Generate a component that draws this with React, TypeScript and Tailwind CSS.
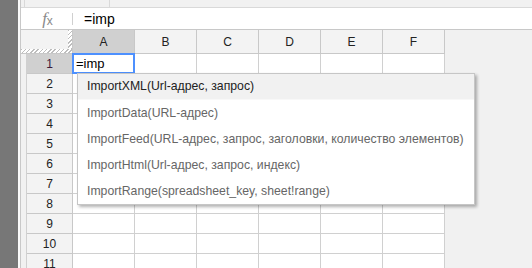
import React from "react";

const cols = ["A", "B", "C", "D", "E", "F"];
const rows = [1, 2, 3, 4, 5, 6, 7, 8, 9, 10, 11];
const items = [
  "ImportXML(Url-адрес, запрос)",
  "ImportData(URL-адрес)",
  "ImportFeed(URL-адрес, запрос, заголовки, количество элементов)",
  "ImportHtml(Url-адрес, запрос, индекс)",
  "ImportRange(spreadsheet_key, sheet!range)",
];

export default function App() {
  return (
    <div
      className="relative w-[532px] h-[268px] overflow-hidden bg-[#f1f1f1] flex"
      style={{ fontFamily: '"Liberation Sans", Arial, sans-serif' }}
    >
      <div className="w-[18px] shrink-0 bg-[#777777]" />
      <div className="w-[2px] shrink-0 bg-[#fafafa]" />
      <div className="flex-1 flex flex-col border-l border-[#c8c8c8]">
        {/* top bar */}
        <div className="h-[8px] shrink-0 flex border-b border-[#d9d9d9] bg-[#f1f1f1]">
          <div className="w-[4px] border-r border-[#d9d9d9]" />
          <div className="w-[85px] border-r border-[#d9d9d9]" />
        </div>
        {/* formula bar */}
        <div className="h-[22px] shrink-0 flex items-center bg-white border-b border-[#c8c8c8]">
          <div className="w-[51px] flex justify-center items-center text-[#8a8a8a] leading-none">
            <span className="italic text-[17px] pl-[2px]" style={{ fontFamily: '"Liberation Serif", serif' }}>f</span>
            <span className="text-[12px] mt-[4px]">x</span>
          </div>
          <div className="w-px h-[12px] bg-[#d0d0d0]" />
          <div className="pl-[11px] text-[14px] text-black leading-none">=imp</div>
        </div>
        {/* column header */}
        <div className="h-[24px] shrink-0 flex bg-[#f1f1f1]">
          <div className="w-[52px] shrink-0 relative border-r border-b border-[#c8c8c8] bg-[#f3f3f3]">
            <div className="absolute right-0 top-0 w-[4px] h-full bg-[repeating-linear-gradient(135deg,#bdbdbd_0px,#bdbdbd_1px,#ffffff_1px,#ffffff_3px)]" />
            <div className="absolute left-0 bottom-0 w-full h-[4px] bg-[repeating-linear-gradient(135deg,#bdbdbd_0px,#bdbdbd_1px,#ffffff_1px,#ffffff_3px)]" />
          </div>
          {cols.map((c, i) => (
            <div
              key={c}
              className={`w-[62px] shrink-0 border-r border-b border-[#c8c8c8] flex items-center justify-center text-[12px] text-[#222] ${
                i === 0 ? "bg-[#d0d0d0]" : "bg-[#f3f3f3]"
              }`}
            >
              {c}
            </div>
          ))}
          <div className="flex-1" />
        </div>
        {/* rows */}
        {rows.map((r) => (
          <div key={r} className="h-[20px] shrink-0 flex">
            <div className="w-[6px] shrink-0 border-r border-[#d0d0d0] bg-[#f1f1f1]" />
            <div
              className={`w-[46px] shrink-0 border-r border-b border-[#c8c8c8] flex items-center justify-center text-[12px] ${
                r === 1 ? "bg-[#d0d0d0] text-[#3a1a3a]" : "bg-[#f3f3f3] text-[#222]"
              }`}
            >
              {r}
            </div>
            {cols.map((c, i) => (
              <div key={c} className="relative w-[62px] shrink-0 border-r border-b border-[#d0d0d0] bg-white">
                {r === 1 && i === 0 && (
                  <div className="absolute left-[-1px] top-[-1px] w-[63px] h-[21px] border-2 border-[#4d90fe] bg-white flex items-center pl-[2px] text-[13px] text-black leading-none">
                    =imp
                  </div>
                )}
              </div>
            ))}
            <div className="flex-1" />
          </div>
        ))}
      </div>
      {/* autocomplete dropdown */}
      <div className="absolute left-[77px] top-[73px] w-[398px] bg-white border border-[#c6c6c6] shadow-[2px_2px_3px_rgba(0,0,0,0.3)] flex flex-col">
        {items.map((t, i) => (
          <div
            key={t}
            className={`h-[26px] flex items-center pl-[9px] text-[12.25px] whitespace-nowrap ${
              i === 0 ? "bg-[#f1f1f1] text-[#222] border-b border-[#f8f8f8]" : "text-[#666]"
            }`}
          >
            {t}
          </div>
        ))}
      </div>
    </div>
  );
}
